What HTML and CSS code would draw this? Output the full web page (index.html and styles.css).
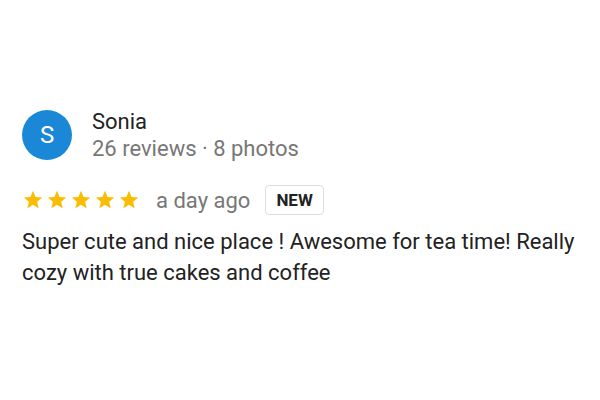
FILE: index.html
```html
<!DOCTYPE html>
<html lang="en">
<head>
  <meta charset="UTF-8" />
  <title>Review</title>
  <link rel="stylesheet" href="styles.css">
</head>
<body>
  <div class="review">
    <div class="author">
      <div class="avatar">S</div>
      <div class="author-info">
        <div class="author-name">Sonia</div>
        <div class="author-meta">26 reviews · 8 photos</div>
      </div>
    </div>

    <div class="rating-row">
      <div class="stars">
        <svg class="star" viewBox="0 0 24 24"><path d="M12 17.27L18.18 21l-1.64-7.03L22 9.24l-7.19-.61L12 2 9.19 8.63 2 9.24l5.46 4.73L5.82 21z"/></svg>
        <svg class="star" viewBox="0 0 24 24"><path d="M12 17.27L18.18 21l-1.64-7.03L22 9.24l-7.19-.61L12 2 9.19 8.63 2 9.24l5.46 4.73L5.82 21z"/></svg>
        <svg class="star" viewBox="0 0 24 24"><path d="M12 17.27L18.18 21l-1.64-7.03L22 9.24l-7.19-.61L12 2 9.19 8.63 2 9.24l5.46 4.73L5.82 21z"/></svg>
        <svg class="star" viewBox="0 0 24 24"><path d="M12 17.27L18.18 21l-1.64-7.03L22 9.24l-7.19-.61L12 2 9.19 8.63 2 9.24l5.46 4.73L5.82 21z"/></svg>
        <svg class="star" viewBox="0 0 24 24"><path d="M12 17.27L18.18 21l-1.64-7.03L22 9.24l-7.19-.61L12 2 9.19 8.63 2 9.24l5.46 4.73L5.82 21z"/></svg>
      </div>
      <span class="review-date">a day ago</span>
      <span class="badge">NEW</span>
    </div>

    <p class="review-text">Super cute and nice place ! Awesome for tea time! Really cozy with true cakes and coffee</p>
  </div>
</body>
</html>
```

FILE: styles.css
```css
body {
  font-family: Roboto, Arial, sans-serif;
  background-color: #fff;
  margin: 0;
  color: #222;
}

.review {
  padding: 108px 10px 0 22px;
}

.author {
  display: flex;
  align-items: center;
}

.avatar {
  width: 50px;
  height: 50px;
  border-radius: 50%;
  background-color: #1a88d6;
  color: #fff;
  font-size: 24px;
  display: flex;
  align-items: center;
  justify-content: center;
}

.author-info {
  margin-left: 20px;
}

.author-name {
  font-size: 22px;
  line-height: 27px;
  color: #222;
}

.author-meta {
  font-size: 22px;
  line-height: 27px;
  color: #777;
}

.rating-row {
  display: flex;
  align-items: center;
  margin-top: 23px;
}

.stars {
  display: flex;
  gap: 2px;
}

.star {
  width: 22px;
  height: 22px;
  fill: #fbbc04;
}

.review-date {
  font-size: 22px;
  color: #777;
  margin-left: 16px;
}

.badge {
  margin-left: 15px;
  padding: 0 10px;
  line-height: 28px;
  border: 1px solid #ddd;
  border-radius: 4px;
  font-size: 17px;
  font-weight: bold;
  color: #222;
}

.review-text {
  margin: 11px 0 0;
  font-size: 22px;
  line-height: 31px;
  color: #222;
}
```
